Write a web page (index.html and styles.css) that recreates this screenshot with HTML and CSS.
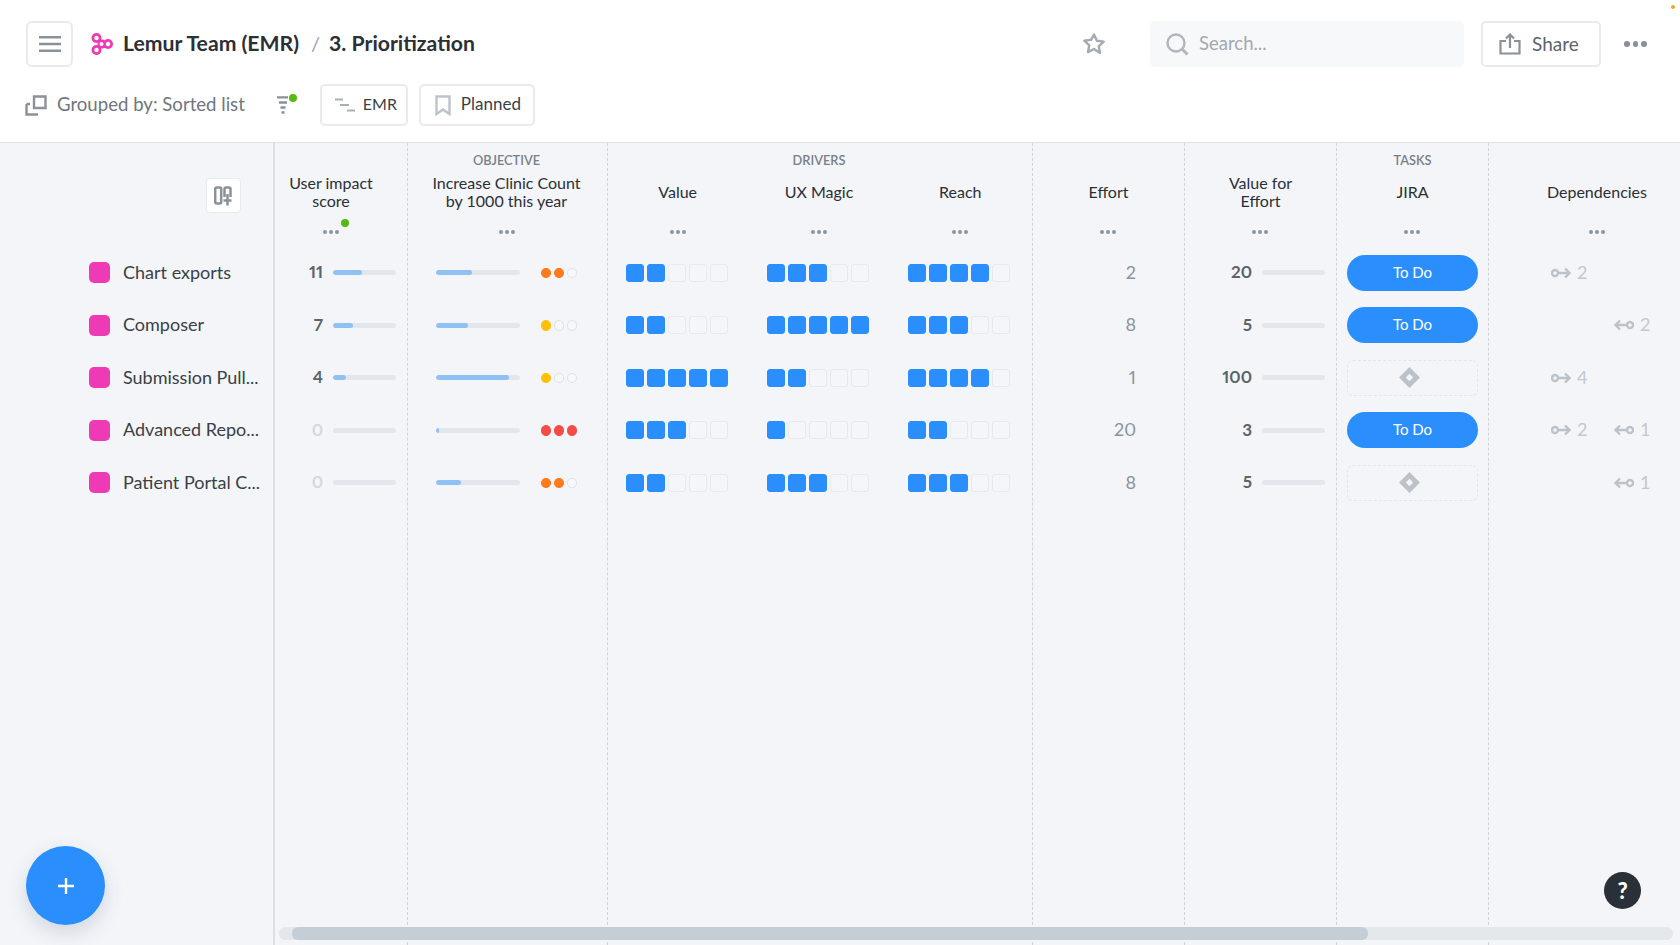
FILE: index.html
```html
<!DOCTYPE html>
<html lang="en">
<head>
<meta charset="utf-8">
<title>3. Prioritization</title>
<link rel="stylesheet" href="styles.css">
</head>
<body>
<header class="topbar">
  <div class="row-one">
    <button class="menu-btn"><svg width="22" height="16" viewBox="0 0 22 16"><path d="M0 1.200h22M0 8h22M0 14.800h22" stroke="#8a9199" stroke-width="2.400"/></svg></button>
    <svg class="logo" width="22" height="22" viewBox="0 0 22 22"><g fill="#ee3bb5"><circle cx="5.500" cy="5" r="5"/><circle cx="5.500" cy="17" r="5"/><circle cx="11" cy="11" r="4.500"/><circle cx="17" cy="11" r="5"/></g><g fill="#fff"><circle cx="5.500" cy="5" r="2.200"/><circle cx="5.500" cy="17" r="2.200"/><circle cx="10.500" cy="11" r="2"/><circle cx="17" cy="11" r="2.200"/></g></svg>
    <span class="crumb">Lemur Team (EMR)</span>
    <span class="slash">/</span>
    <span class="crumb">3. Prioritization</span>
    <svg class="star" width="24" height="24" viewBox="0 0 24 24" fill="none" stroke="#a5abb2" stroke-width="2.400" stroke-linejoin="round"><path d="M12 2.500l2.900 6.300 6.800.8-5 4.700 1.300 6.800L12 17l-6 3.100 1.300-6.800-5-4.700 6.800-.8z"/></svg>
    <div class="search">
      <svg width="23" height="23" viewBox="0 0 23 23" fill="none" stroke="#b0b6bc" stroke-width="2.400"><circle cx="10" cy="10" r="8.500"/><path d="M16 16l5.500 5.500" stroke-width="3"/></svg>
      <span>Search...</span>
    </div>
    <button class="share-btn"><svg width="22" height="22" viewBox="0 0 22 22" fill="none" stroke="#8a9199" stroke-width="2.200"><path d="M7 8H1.500v12.500h19V8H15"/><path d="M11 15V2M7 5.500L11 1.500l4 4"/></svg><span>Share</span></button>
    <div class="big-dots"><i></i><i></i><i></i></div>
    <i class="corner-dot"></i>
  </div>
  <div class="row-two">
    <svg class="group-icon" width="22" height="21" viewBox="0 0 22 21" fill="none" stroke="#8a9199" stroke-width="2.400"><path d="M9 1.500h11.500V13H9z"/><path d="M1.500 9v10.500H13M1.500 9H5"/></svg>
    <span class="grouped">Grouped by: Sorted list</span>
    <span class="filter"><svg width="12" height="19" viewBox="0 0 12 19"><path d="M0 1.300h11M2 6.500h8M3.500 11.500h5M4.500 16.500h3" stroke="#8a9199" stroke-width="2.300"/></svg><i class="green-dot"></i></span>
    <button class="chip chip-emr"><svg width="20" height="14" viewBox="0 0 20 14"><path d="M0 1.500h8M5 7h9M12 12.500h8" stroke="#a9afb6" stroke-width="2"/></svg><span>EMR</span></button>
    <button class="chip chip-planned"><svg width="16" height="21" viewBox="0 0 16 21" fill="none" stroke="#bcc3cb" stroke-width="2.400"><path d="M1.500 1.500h13v17.500L8 14.500 1.500 19z"/></svg><span>Planned</span></button>
  </div>
</header>
<main class="board">
  <aside class="sidebar">
    <div class="side-head"><button class="sort-btn"><svg width="20" height="20" viewBox="0 0 20 20" fill="none" stroke="#8a9199" stroke-width="2.500"><rect x="1.200" y="1.500" width="6" height="16" rx="1.500"/><path d="M10.500 11V3A1.500 1.500 0 0 1 12 1.500h3A1.500 1.500 0 0 1 16.500 3V11"/><path d="M13.500 8v11.500M9.500 14.500h8"/></svg></button></div>
    <div class="side-row"><i class="swatch"></i><span>Chart exports</span></div>
    <div class="side-row"><i class="swatch"></i><span>Composer</span></div>
    <div class="side-row"><i class="swatch"></i><span>Submission Pull...</span></div>
    <div class="side-row"><i class="swatch"></i><span>Advanced Repo...</span></div>
    <div class="side-row"><i class="swatch"></i><span>Patient Portal C...</span></div>
  </aside>
  <div class="table">
    <section class="group">
      <div class="group-label"></div>
      <div class="group-cols"><div class="col col-first">
        <div class="title">User impact<br>score</div>
        <div class="menu"><span class="menu-dots"><i></i><i></i><i></i><b class="menu-badge"></b></span></div>
        <div class="cell score"><b>11</b><span class="track"><i class="fill" style="width:29px"></i></span></div>
        <div class="cell score"><b>7</b><span class="track"><i class="fill" style="width:20px"></i></span></div>
        <div class="cell score"><b>4</b><span class="track"><i class="fill" style="width:13px"></i></span></div>
        <div class="cell score"><b class="zero">0</b><span class="track"></span></div>
        <div class="cell score"><b class="zero">0</b><span class="track"></span></div>
      </div></div>
    </section>
    <section class="group">
      <div class="group-label label-shift">OBJECTIVE</div>
      <div class="group-cols"><div class="col col-wide">
        <div class="title">Increase Clinic Count<br>by 1000 this year</div>
        <div class="menu"><span class="menu-dots"><i></i><i></i><i></i></span></div>
        <div class="cell objective"><span class="track track-long"><i class="fill" style="width:36px"></i></span><span class="lights"><i class="orange"></i><i class="orange"></i><i></i></span></div>
        <div class="cell objective"><span class="track track-long"><i class="fill" style="width:32px"></i></span><span class="lights"><i class="yellow"></i><i></i><i></i></span></div>
        <div class="cell objective"><span class="track track-long"><i class="fill" style="width:73px"></i></span><span class="lights"><i class="yellow"></i><i></i><i></i></span></div>
        <div class="cell objective"><span class="track track-long"><i class="fill" style="width:3px"></i></span><span class="lights"><i class="red"></i><i class="red"></i><i class="red"></i></span></div>
        <div class="cell objective"><span class="track track-long"><i class="fill" style="width:25px"></i></span><span class="lights"><i class="orange"></i><i class="orange"></i><i></i></span></div>
      </div></div>
    </section>
    <section class="group">
      <div class="group-label label-shift">DRIVERS</div>
      <div class="group-cols">
        <div class="col col-driver">
          <div class="title">Value</div>
          <div class="menu"><span class="menu-dots"><i></i><i></i><i></i></span></div>
          <div class="cell squares"><i class="on"></i><i class="on"></i><i></i><i></i><i></i></div>
          <div class="cell squares"><i class="on"></i><i class="on"></i><i></i><i></i><i></i></div>
          <div class="cell squares"><i class="on"></i><i class="on"></i><i class="on"></i><i class="on"></i><i class="on"></i></div>
          <div class="cell squares"><i class="on"></i><i class="on"></i><i class="on"></i><i></i><i></i></div>
          <div class="cell squares"><i class="on"></i><i class="on"></i><i></i><i></i><i></i></div>
        </div>
        <div class="col col-driver">
          <div class="title">UX Magic</div>
          <div class="menu"><span class="menu-dots"><i></i><i></i><i></i></span></div>
          <div class="cell squares"><i class="on"></i><i class="on"></i><i class="on"></i><i></i><i></i></div>
          <div class="cell squares"><i class="on"></i><i class="on"></i><i class="on"></i><i class="on"></i><i class="on"></i></div>
          <div class="cell squares"><i class="on"></i><i class="on"></i><i></i><i></i><i></i></div>
          <div class="cell squares"><i class="on"></i><i></i><i></i><i></i><i></i></div>
          <div class="cell squares"><i class="on"></i><i class="on"></i><i class="on"></i><i></i><i></i></div>
        </div>
        <div class="col col-driver">
          <div class="title">Reach</div>
          <div class="menu"><span class="menu-dots"><i></i><i></i><i></i></span></div>
          <div class="cell squares"><i class="on"></i><i class="on"></i><i class="on"></i><i class="on"></i><i></i></div>
          <div class="cell squares"><i class="on"></i><i class="on"></i><i class="on"></i><i></i><i></i></div>
          <div class="cell squares"><i class="on"></i><i class="on"></i><i class="on"></i><i class="on"></i><i></i></div>
          <div class="cell squares"><i class="on"></i><i class="on"></i><i></i><i></i><i></i></div>
          <div class="cell squares"><i class="on"></i><i class="on"></i><i class="on"></i><i></i><i></i></div>
        </div>
      </div>
    </section>
    <section class="group">
      <div class="group-label"></div>
      <div class="group-cols"><div class="col">
        <div class="title">Effort</div>
        <div class="menu"><span class="menu-dots"><i></i><i></i><i></i></span></div>
        <div class="cell effort"><span>2</span></div>
        <div class="cell effort"><span>8</span></div>
        <div class="cell effort"><span>1</span></div>
        <div class="cell effort"><span>20</span></div>
        <div class="cell effort"><span>8</span></div>
      </div></div>
    </section>
    <section class="group">
      <div class="group-label"></div>
      <div class="group-cols"><div class="col">
        <div class="title">Value for<br>Effort</div>
        <div class="menu"><span class="menu-dots"><i></i><i></i><i></i></span></div>
        <div class="cell score"><b>20</b><span class="track"></span></div>
        <div class="cell score"><b>5</b><span class="track"></span></div>
        <div class="cell score"><b>100</b><span class="track"></span></div>
        <div class="cell score"><b>3</b><span class="track"></span></div>
        <div class="cell score"><b>5</b><span class="track"></span></div>
      </div></div>
    </section>
    <section class="group">
      <div class="group-label">TASKS</div>
      <div class="group-cols"><div class="col">
        <div class="title">JIRA</div>
        <div class="menu"><span class="menu-dots"><i></i><i></i><i></i></span></div>
        <div class="cell jira"><span class="todo"><span>To Do</span></span></div>
        <div class="cell jira"><span class="todo"><span>To Do</span></span></div>
        <div class="cell jira"><span class="no-task"><svg width="21" height="21" viewBox="0 0 20 20"><path fill-rule="evenodd" fill="#bcc2c8" d="M10 0l10 10-10 10L0 10zM10 6.500L6.500 10l3.500 3.500 3.500-3.500z"/></svg></span></div>
        <div class="cell jira"><span class="todo"><span>To Do</span></span></div>
        <div class="cell jira"><span class="no-task"><svg width="21" height="21" viewBox="0 0 20 20"><path fill-rule="evenodd" fill="#bcc2c8" d="M10 0l10 10-10 10L0 10zM10 6.500L6.500 10l3.500 3.500 3.500-3.500z"/></svg></span></div>
      </div></div>
    </section>
    <section class="group group-last">
      <div class="group-label"></div>
      <div class="group-cols"><div class="col col-deps">
        <div class="title">Dependencies</div>
        <div class="menu"><span class="menu-dots"><i></i><i></i><i></i></span></div>
        <div class="cell deps">
          <span class="dep"><svg width="20" height="12" viewBox="0 0 20 12" fill="none" stroke="#bcc2c8" stroke-width="2.300"><circle cx="4" cy="6" r="3"/><path d="M7 6h11.500M14 1.500L18.500 6 14 10.500"/></svg><span>2</span></span>
          <span class="dep"></span>
        </div>
        <div class="cell deps">
          <span class="dep"></span>
          <span class="dep"><svg width="20" height="12" viewBox="0 0 20 12" fill="none" stroke="#bcc2c8" stroke-width="2.300"><circle cx="16" cy="6" r="3"/><path d="M13 6H1.500M6 1.500L1.500 6 6 10.500"/></svg><span>2</span></span>
        </div>
        <div class="cell deps">
          <span class="dep"><svg width="20" height="12" viewBox="0 0 20 12" fill="none" stroke="#bcc2c8" stroke-width="2.300"><circle cx="4" cy="6" r="3"/><path d="M7 6h11.500M14 1.500L18.500 6 14 10.500"/></svg><span>4</span></span>
          <span class="dep"></span>
        </div>
        <div class="cell deps">
          <span class="dep"><svg width="20" height="12" viewBox="0 0 20 12" fill="none" stroke="#bcc2c8" stroke-width="2.300"><circle cx="4" cy="6" r="3"/><path d="M7 6h11.500M14 1.500L18.500 6 14 10.500"/></svg><span>2</span></span>
          <span class="dep"><svg width="20" height="12" viewBox="0 0 20 12" fill="none" stroke="#bcc2c8" stroke-width="2.300"><circle cx="16" cy="6" r="3"/><path d="M13 6H1.500M6 1.500L1.500 6 6 10.500"/></svg><span>1</span></span>
        </div>
        <div class="cell deps">
          <span class="dep"></span>
          <span class="dep"><svg width="20" height="12" viewBox="0 0 20 12" fill="none" stroke="#bcc2c8" stroke-width="2.300"><circle cx="16" cy="6" r="3"/><path d="M13 6H1.500M6 1.500L1.500 6 6 10.500"/></svg><span>1</span></span>
        </div>
      </div></div>
    </section>
  </div>
  <div class="scrollbar"><div class="thumb"></div></div>
  <button class="fab"><svg width="16" height="16" viewBox="0 0 16 16"><path d="M8 0v16M0 8h16" stroke="#fff" stroke-width="2.400"/></svg></button>
  <button class="help">?</button>
</main>
</body>
</html>
```
FILE: styles.css
```css
* { box-sizing: border-box; }
html, body { margin: 0; height: 945px; overflow: hidden; }
body { font-family: Lato, "Open Sans", sans-serif; background: #f3f5f9; color: #2b2f36; }
button { font: inherit; cursor: pointer; }
i { display: block; }

.topbar { position: relative; height: 143px; background: #fff; border-bottom: 1px solid #dfe2e6; padding: 21px 0 0 26px; }
.row-one { display: flex; align-items: center; height: 46px; }
.row-two { display: flex; align-items: center; height: 42px; margin-top: 17px; margin-left: -1px; }

.menu-btn { width: 47px; height: 46px; margin-top: -1px; background: #fff; border: 2px solid #e8eaee; border-radius: 6px; display: flex; align-items: center; justify-content: center; padding: 0; }
.logo { margin-left: 18px; margin-right: 10px; }
.crumb { font-size: 21.200px; font-weight: 700; color: #2b2f36; padding-bottom: 2px; }
.slash { font-size: 20px; color: #9aa0a7; margin: 0 9px 0 12px; padding-bottom: 2px; }
.star { margin-left: auto; }
.search { width: 314px; height: 46px; margin-left: 44px; background: #f7f8fa; border-radius: 5px; display: flex; align-items: center; padding-left: 16px; gap: 10px; font-size: 18.500px; color: #a3a9b0; }
.search span, .share-btn span { padding-bottom: 2px; }
.share-btn { width: 120px; height: 46px; margin-left: 17px; background: #fff; border: 2px solid #e8eaee; border-radius: 5px; display: flex; align-items: center; gap: 11px; padding: 0 0 0 16px; font-size: 19px; color: #5d636b; }
.big-dots { display: flex; gap: 3px; margin: 0 32px 0 23px; width: 24px; }
.big-dots i { width: 5.500px; height: 5.500px; border-radius: 50%; background: #8a9199; }
.corner-dot { position: absolute; top: 5px; right: 5px; width: 4px; height: 4px; border-radius: 50%; background: #f5a623; }

.group-icon { flex: none; }
.grouped { margin-left: 10px; font-size: 18.600px; color: #70767e; padding-bottom: 3px; }
.filter { position: relative; display: flex; margin-left: 32px; }
.green-dot { position: absolute; top: -2px; left: 12px; width: 8px; height: 8px; border-radius: 50%; background: #58b90e; }
.chip { height: 42px; background: #fff; border: 2px solid #e8eaee; border-radius: 5px; display: flex; align-items: center; font-size: 17px; color: #3a3f46; }
.chip span { padding-bottom: 3px; }
.chip-emr { width: 88px; margin-left: 31px; gap: 8px; padding: 0 0 0 13px; font-size: 16px; }
.chip-planned { width: 116px; margin-left: 11px; gap: 10px; padding: 0 0 0 14px; }

.board { position: relative; display: flex; height: 802px; overflow: hidden; }
.sidebar { flex: none; width: 275px; border-right: 2px solid #dadfe4; }
.side-head { height: 103.500px; padding: 35px 0 0 206px; }
.sort-btn { width: 35px; height: 35px; background: #fff; border: 1px solid #e8eaee; border-radius: 4px; padding: 0; display: flex; align-items: center; justify-content: center; }
.side-row { height: 52.500px; display: flex; align-items: center; padding-left: 89px; gap: 13px; font-size: 18px; color: #3a3f46; white-space: nowrap; }
.side-row span { padding-bottom: 2px; }
.swatch { width: 21px; height: 21px; border-radius: 5px; background: #ee3bb5; flex: none; }

.table { display: flex; margin-left: -20px; }
.group { display: flex; flex-direction: column; border-right: 1px dashed #cfd4da; flex: none; }
.group-last { border-right: 0; }
.group-label { height: 31px; padding-top: 9px; text-align: center; font-size: 12.800px; line-height: 16px; font-weight: 600; color: #7a8088; }
.label-shift { padding-right: 2px; }
.group-cols { display: flex; }
.col { width: 151px; flex: none; }
.col-first { width: 152px; }
.col-wide { width: 199px; }
.col-driver { width: 141.330px; }
.col-deps { width: 216px; }
.col-wide .title, .col-wide .menu, .col-driver .title, .col-driver .menu { padding-right: 2px; }

.title { height: 36px; display: flex; align-items: center; justify-content: center; text-align: center; font-size: 16px; line-height: 18px; color: #2b2f36; }
.menu { height: 36.500px; padding-top: 7px; display: flex; align-items: center; justify-content: center; }
.menu-dots { position: relative; display: flex; gap: 2px; }
.menu-dots i { width: 4px; height: 4px; border-radius: 50%; background: #8d949c; }
.menu-badge { position: absolute; top: -11px; left: 18px; width: 8px; height: 8px; border-radius: 50%; background: #58b90e; }

.cell { height: 52.500px; display: flex; align-items: center; }
.score { justify-content: flex-end; gap: 10px; padding-right: 11px; font-size: 17px; }
.score b { font-weight: 700; color: #5d636b; padding-bottom: 2px; font-variant-numeric: proportional-nums; }
.score b.zero { color: #d5d9de; }
.track { display: block; width: 63px; height: 5px; border-radius: 3px; background: #e3e7eb; overflow: hidden; flex: none; }
.track-long { width: 84px; }
.fill { height: 100%; background: #8fc1f5; border-radius: 3px; }
.objective { padding-left: 28px; gap: 21px; }
.lights { display: flex; gap: 3px; }
.lights i { width: 10px; height: 10.500px; border-radius: 50%; border: 1px solid #dde2e7; background: #f7f8fa; }
.lights .orange { background: #ff7a1a; border-color: #ff7a1a; }
.lights .yellow { background: #ffc107; border-color: #ffc107; }
.lights .red { background: #f44c46; border-color: #f44c46; }

.squares { padding-left: 17.500px; gap: 3px; }
.squares i { width: 18px; height: 18px; border-radius: 3px; border: 1px solid #e6e9ee; background: #f4f6fa; }
.squares .on { background: #2a8ffc; border-color: #2a8ffc; }

.effort { justify-content: flex-end; padding-right: 48px; font-size: 18px; color: #8b939c; font-variant-numeric: proportional-nums; }
.effort span { padding-bottom: 2px; }
.jira { justify-content: center; }
.todo { width: 131px; height: 36px; border-radius: 18px; background: #2a8ffc; color: #fff; font-size: 15px; display: flex; align-items: center; justify-content: center; }
.todo span { padding-bottom: 2px; }
.no-task { width: 131px; height: 36px; border-radius: 6px; border: 1px dashed #e2e5e9; display: flex; align-items: center; justify-content: center; padding-right: 6px; }
.deps { padding-left: 62px; font-size: 18px; color: #c3c8ce; }
.dep { width: 63px; display: flex; align-items: center; gap: 6px; }
.dep span { padding-bottom: 2px; }

.scrollbar { position: absolute; left: 279px; top: 784px; width: 1394px; height: 13px; border-radius: 6px; background: #e4e8ec; }
.thumb { margin-left: 13px; width: 1076px; height: 13px; border-radius: 6px; background: #c5ced6; }
.fab { position: absolute; left: 26px; top: 703px; width: 79px; height: 79px; border: 0; border-radius: 50%; background: #2a8ffc; box-shadow: 0 8px 20px rgba(40,60,90,.16); display: flex; align-items: center; justify-content: center; padding: 0; }
.help { position: absolute; left: 1604px; top: 729px; width: 37px; height: 37px; border: 0; border-radius: 50%; background: #2a3038; color: #fff; font-size: 22px; line-height: 1; font-weight: 900; padding: 0; }
```
